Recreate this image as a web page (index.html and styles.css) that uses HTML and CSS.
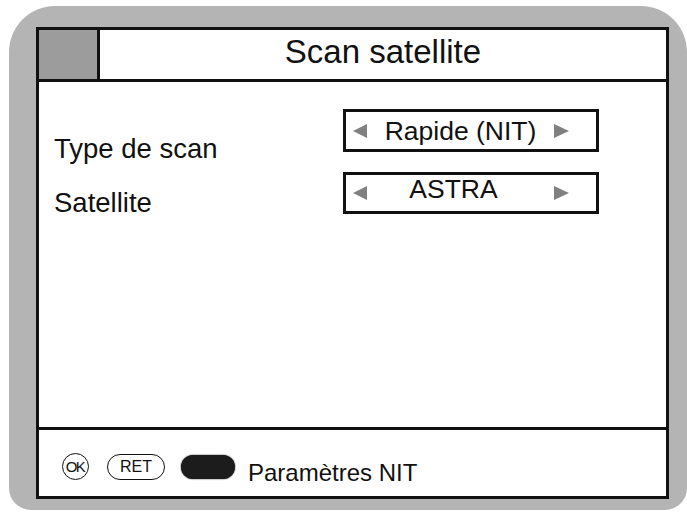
FILE: index.html
```html
<!DOCTYPE html>
<html lang="fr">
<head>
<meta charset="utf-8">
<title>Scan satellite</title>
<link rel="stylesheet" href="styles.css">
</head>
<body>
<div class="panel">
  <div class="screen">
    <div class="header">
      <div class="square"></div>
      <div class="title">Scan satellite</div>
    </div>
    <div class="content">
      <div class="labels">
        <div class="label">Type de scan</div>
        <div class="label">Satellite</div>
      </div>
      <div class="selectors">
        <div class="selector">
          <span class="arrow left"></span>
          <span class="value">Rapide (NIT)</span>
          <span class="arrow right"></span>
        </div>
        <div class="selector">
          <span class="arrow left"></span>
          <span class="value raised">ASTRA</span>
          <span class="arrow right"></span>
        </div>
      </div>
    </div>
    <div class="footer">
      <span class="btn-ok">OK</span>
      <span class="btn-ret">RET</span>
      <span class="btn-black"></span>
      <span class="footer-text">Paramètres NIT</span>
    </div>
  </div>
</div>
</body>
</html>
```
FILE: styles.css
```css
* { box-sizing: border-box; }
html, body { margin: 0; padding: 0; background: #fff; }
body {
  font-family: "Liberation Sans", Arial, Helvetica, sans-serif;
  color: #111;
}
.panel {
  margin: 6px 0 0 9px;
  width: 678px;
  height: 504px;
  background: #b4b4b4;
  border-radius: 46px 46px 22px 22px;
  padding: 21px 18px 0 27px;
}
.screen {
  width: 633px;
  height: 472px;
  border: 3px solid #111;
  background: #fff;
  display: flex;
  flex-direction: column;
}
.header {
  height: 52px;
  border-bottom: 3px solid #111;
  display: flex;
}
.square {
  width: 61px;
  background: #9c9c9c;
  border-right: 3px solid #111;
}
.title {
  flex: 1;
  display: flex;
  align-items: center;
  justify-content: center;
  font-size: 33px;
  padding-bottom: 6px;
}
.content {
  flex: 1;
  display: flex;
}
.labels {
  width: 304px;
  padding: 52px 0 0 15px;
  display: flex;
  flex-direction: column;
  gap: 24px;
}
.label {
  font-size: 27.5px;
  line-height: 30px;
}
.selectors {
  padding-top: 27px;
  display: flex;
  flex-direction: column;
  gap: 20px;
}
.selector {
  width: 256px;
  height: 43px;
  border: 3px solid #111;
  display: flex;
  align-items: center;
  padding: 0 27px 0 7px;
}
.selector + .selector { height: 42px; }
.value {
  flex: 1;
  text-align: center;
  font-size: 26.5px;
  line-height: 30px;
}
.value.raised { padding: 0 14px 8px 0; }
.arrow {
  width: 0;
  height: 0;
  border-top: 7.5px solid transparent;
  border-bottom: 7.5px solid transparent;
}
.arrow.left { border-right: 14px solid #808080; }
.arrow.right { border-left: 15px solid #808080; }
.footer {
  height: 69px;
  border-top: 3px solid #111;
  display: flex;
  align-items: center;
  padding: 7px 0 0 23px;
}
.btn-ok {
  width: 27px;
  height: 27px;
  border: 1.6px solid #111;
  border-radius: 50%;
  display: flex;
  align-items: center;
  justify-content: center;
  font-size: 15px;
  letter-spacing: -1.5px;
  padding-right: 1px;
  margin-right: 18px;
}
.btn-ret {
  width: 58px;
  height: 26px;
  border: 1.6px solid #111;
  border-radius: 13px;
  display: flex;
  align-items: center;
  justify-content: center;
  font-size: 16px;
  margin-right: 16px;
}
.btn-black {
  width: 54px;
  height: 24px;
  background: #1c1c1c;
  border-radius: 12px;
  box-shadow: 0 0 1.5px #000;
  margin-right: 13px;
}
.footer-text {
  font-size: 24px;
  padding-top: 12px;
}
```
